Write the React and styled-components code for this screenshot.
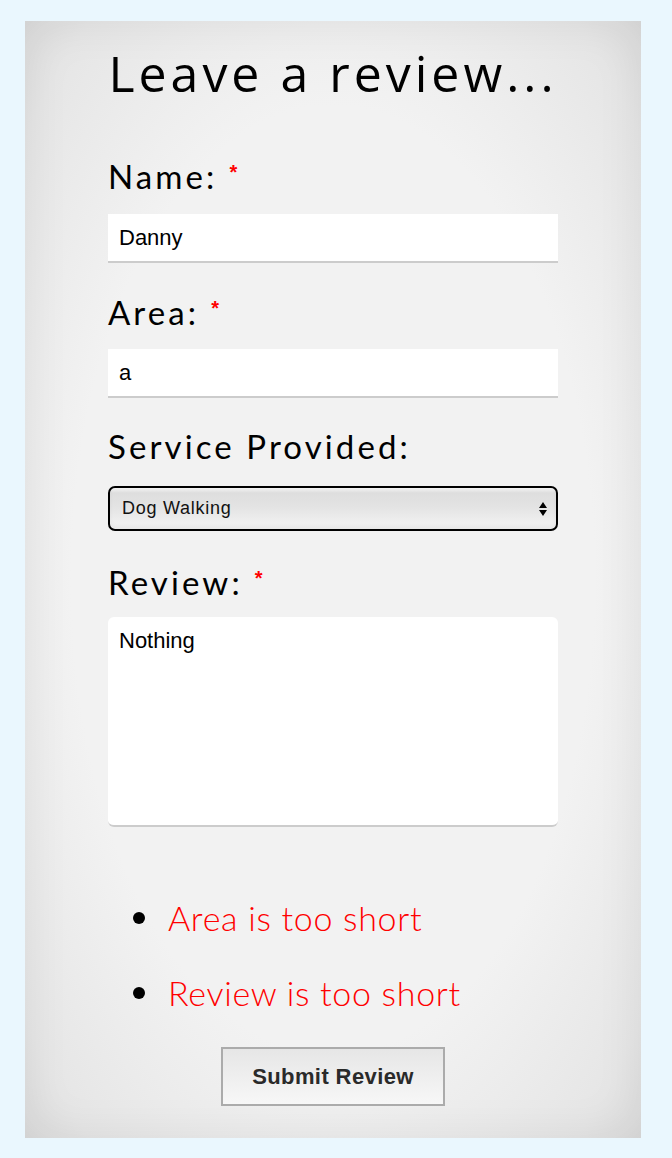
import React from "react";
import styled, { createGlobalStyle } from "styled-components";

const GlobalStyle = createGlobalStyle`
  html, body {
    margin: 0;
    padding: 0;
    background: #eaf7fe;
  }
  body {
    font-family: "Lato", "Liberation Sans", sans-serif;
  }
`;

const Page = styled.div`
  padding: 21px 31px 20px 25px;
`;

const Card = styled.form`
  width: 616px;
  box-sizing: border-box;
  padding: 22px 83px 32px;
  background: radial-gradient(ellipse at 50% 50%, #f2f2f2 60%, #e6e6e6 90%, #dedede 100%);
  box-shadow: inset 0 0 50px rgba(0, 0, 0, 0.07);
  display: flex;
  flex-direction: column;
`;

const Title = styled.h1`
  margin: 0;
  font-family: "Open Sans", sans-serif;
  font-weight: 400;
  font-size: 50px;
  line-height: 60px;
  letter-spacing: 4px;
  text-align: center;
  color: #000;
`;

const Label = styled.label`
  display: block;
  margin: ${({ top }) => top}px 0 ${({ bottom }) => bottom}px;
  font-family: "Lato", sans-serif;
  font-size: 33px;
  line-height: 40px;
  letter-spacing: 3.1px;
  color: #000;
`;

const Star = styled.span`
  color: #ff0000;
  font-size: 20px;
  line-height: 0;
  vertical-align: 10px;
  margin-left: 12px;
  letter-spacing: 0;
  font-family: "Liberation Sans", sans-serif;
  font-weight: 700;
`;

const TextInput = styled.input`
  display: block;
  width: 100%;
  height: 49px;
  box-sizing: border-box;
  border: none;
  border-bottom: 2px solid #cccccc;
  background: #fff;
  padding: 0 11px;
  font-family: "Liberation Sans", sans-serif;
  font-size: 22px;
  color: #000;
  outline: none;
`;

const SelectBox = styled.div`
  height: 45px;
  box-sizing: border-box;
  border: 2px solid #000;
  border-radius: 7px;
  background: linear-gradient(#f4f4f4 0%, #dedede 12%, #e3e3e3 45%, #eeeeee 80%, #f3f3f3 100%);
  box-shadow: inset 0 -3px 4px rgba(0, 0, 0, 0.05);
  display: flex;
  align-items: center;
  justify-content: space-between;
  padding: 0 8px 0 12px;
  font-family: "Liberation Sans", sans-serif;
  font-size: 18px;
  letter-spacing: 0.75px;
  color: #111;
`;

const Arrows = styled.svg`
  width: 10px;
  height: 16px;
`;

const TextArea = styled.textarea`
  display: block;
  width: 100%;
  height: 210px;
  box-sizing: border-box;
  border: none;
  border-bottom: 2px solid #cccccc;
  border-radius: 6px;
  background: #fff;
  padding: 11px 11px;
  resize: none;
  font-family: "Liberation Sans", sans-serif;
  font-size: 22px;
  line-height: 26px;
  color: #000;
  outline: none;
`;

const Errors = styled.ul`
  list-style: none;
  margin: 71px 0 0;
  padding: 0 0 0 25px;
  display: flex;
  flex-direction: column;
  gap: 35px;
`;

const ErrorItem = styled.li`
  display: flex;
  align-items: center;
  gap: 23px;
  font-family: "Lato", sans-serif;
  font-weight: 300;
  font-size: 34px;
  line-height: 40px;
  letter-spacing: 0.7px;
  color: #ff0000;

  &::before {
    content: "";
    width: 12px;
    height: 12px;
    border-radius: 50%;
    background: #000;
    flex: none;
  }
`;

const Submit = styled.button`
  align-self: center;
  margin-top: 34px;
  width: 224px;
  height: 59px;
  border: 2px solid #ababab;
  background: linear-gradient(#e6e6e6, #f7f7f7);
  font-family: "Liberation Sans", sans-serif;
  font-weight: 700;
  font-size: 22px;
  letter-spacing: 0.4px;
  color: #2a2a2a;
  cursor: pointer;
`;

const errors = ["Area is too short", "Review is too short"];

export default function App() {
  return (
    <Page>
      <GlobalStyle />
      <Card onSubmit={(e) => e.preventDefault()}>
        <Title>Leave a review...</Title>

        <Label top={53} bottom={18}>
          Name:<Star>*</Star>
        </Label>
        <TextInput defaultValue="Danny" />

        <Label top={29} bottom={17}>
          Area:<Star>*</Star>
        </Label>
        <TextInput defaultValue="a" />

        <Label top={28} bottom={20}>
          Service Provided:
        </Label>
        <SelectBox>
          <span>Dog Walking</span>
          <Arrows viewBox="0 0 10 16">
            <path d="M5 1 L9 7 H1 Z M5 15 L1 9 H9 Z" fill="#000" />
          </Arrows>
        </SelectBox>

        <Label top={31} bottom={15}>
          Review:<Star>*</Star>
        </Label>
        <TextArea defaultValue="Nothing" />

        <Errors>
          {errors.map((msg) => (
            <ErrorItem key={msg}>{msg}</ErrorItem>
          ))}
        </Errors>

        <Submit type="submit">Submit Review</Submit>
      </Card>
    </Page>
  );
}
